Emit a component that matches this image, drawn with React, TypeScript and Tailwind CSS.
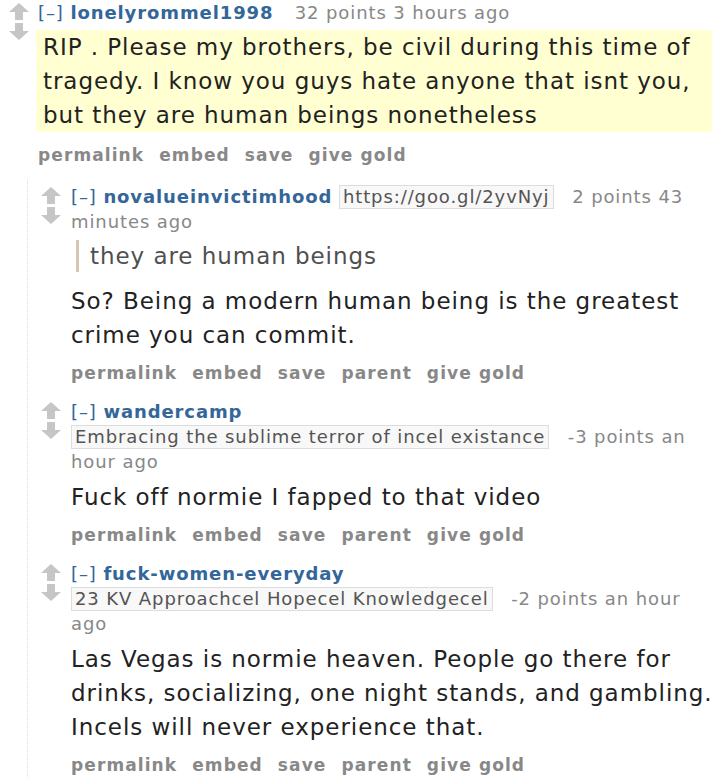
import type { ReactNode } from 'react';

type Reply = {
  author: string;
  flair?: string;
  score: string;
  time: string;
  quote?: string;
  body: string[];
};

const replies: Reply[] = [
  {
    author: 'novalueinvictimhood',
    flair: 'https://goo.gl/2yvNyj',
    score: '2 points',
    time: '43 minutes ago',
    quote: 'they are human beings',
    body: ['So? Being a modern human being is the greatest crime you can commit.'],
  },
  {
    author: 'wandercamp',
    flair: 'Embracing the sublime terror of incel existance',
    score: '-3 points',
    time: 'an hour ago',
    body: ['Fuck off normie I fapped to that video'],
  },
  {
    author: 'fuck-women-everyday',
    flair: '23 KV Approachcel Hopecel Knowledgecel',
    score: '-2 points',
    time: 'an hour ago',
    body: [
      'Las Vegas is normie heaven. People go there for drinks, socializing, one night stands, and gambling. Incels will never experience that.',
    ],
  },
];

function VoteArrows() {
  return (
    <div className="flex flex-col items-center gap-[3px] pt-[3px]">
      <svg width="20" height="17" viewBox="0 0 20 17">
        <path d="M10 0 L20 9 L14 9 L14 17 L6 17 L6 9 L0 9 Z" fill="#c6c6c6" />
      </svg>
      <svg width="20" height="17" viewBox="0 0 20 17">
        <path d="M10 17 L20 8 L14 8 L14 0 L6 0 L6 8 L0 8 Z" fill="#c6c6c6" />
      </svg>
    </div>
  );
}

function Tagline({ author, flair, score, time }: { author: string; flair?: string; score: string; time: string }) {
  return (
    <p className="m-0 text-[18px] leading-[25px] tracking-[0.9px] text-[#888]">
      <span className="text-[#369]">[–]</span>{' '}
      <span className="font-bold text-[#369]">{author}</span>{' '}
      {flair ? (
        <span className="mr-[12px] inline-block border border-[#ddd] bg-[#f8f8f8] px-[3px] leading-[22px] whitespace-nowrap text-[#545454]">
          {flair}
        </span>
      ) : (
        <span className="inline-block w-[8px]" />
      )}{' '}
      {score} {time}
    </p>
  );
}

function Buttons({ parent }: { parent?: boolean }) {
  const items = parent
    ? ['permalink', 'embed', 'save', 'parent', 'give gold']
    : ['permalink', 'embed', 'save', 'give gold'];
  return (
    <ul className="m-0 flex list-none gap-[15px] p-0 text-[17px] leading-[25px] tracking-[1.1px] font-bold text-[#888]">
      {items.map((item) => (
        <li key={item}>{item}</li>
      ))}
    </ul>
  );
}

function Body({ children }: { children: ReactNode }) {
  return <div className="text-[23px] leading-[34px] tracking-[0.95px] text-[#222]">{children}</div>;
}

export default function App() {
  return (
    <main
      className="min-h-screen w-[714px] overflow-hidden bg-white"
      style={{ fontFamily: '"DejaVu Sans", Verdana, sans-serif' }}
    >
      <div className="flex">
        <div className="flex w-[36px] shrink-0 justify-center pl-[1px]">
          <VoteArrows />
        </div>
        <div className="min-w-0 flex-1 pr-[2px]">
          <div className="pl-[2px]">
            <Tagline author="lonelyrommel1998" score="32 points" time="3 hours ago" />
          </div>
          <div className="mt-[5px] bg-[#ffffd1] pl-[7px] pr-[8px]">
            <Body>
              <p className="m-0">
                RIP . Please my brothers, be civil during this time of tragedy. I know you guys hate anyone that isnt
                you, but they are human beings nonetheless
              </p>
            </Body>
          </div>
          <div className="mt-[11px] pl-[2px]">
            <Buttons />
          </div>
        </div>
      </div>

      <div className="ml-[27px] mt-[11px] border-l border-dotted border-[#ddd] pt-[5px]">
        {replies.map((reply) => (
          <div key={reply.author} className="mb-[13px] flex">
            <div className="flex w-[43px] shrink-0 justify-center pl-[3px]">
              <VoteArrows />
            </div>
            <div className="min-w-0 flex-1">
              <Tagline author={reply.author} flair={reply.flair} score={reply.score} time={reply.time} />
              <Body>
                {reply.quote && (
                  <blockquote className="mt-[6px] mb-[12px] ml-[5px] border-l-[3px] border-[#d6c7b4] pl-[11px] leading-[32px] text-[#4f4f4f]">
                    {reply.quote}
                  </blockquote>
                )}
                {reply.body.map((para) => (
                  <p key={para} className={reply.quote ? 'm-0' : 'm-0 mt-[6px]'}>
                    {para}
                  </p>
                ))}
              </Body>
              <div className="mt-[9px]">
                <Buttons parent />
              </div>
            </div>
          </div>
        ))}
      </div>
    </main>
  );
}
